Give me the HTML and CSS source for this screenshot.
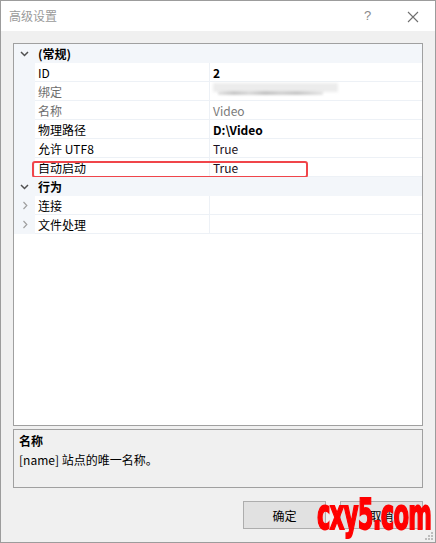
FILE: index.html
```html
<!DOCTYPE html>
<html>
<head>
<meta charset="utf-8">
<link rel="stylesheet" href="styles.css">
</head>
<body>
<div class="window">
  <div class="titlebar">
    <span class="title">高级设置</span>
    <span class="help">?</span>
    <svg class="close" width="12" height="12" viewBox="0 0 12 12"><path d="M1 1 L11 11 M11 1 L1 11" stroke="#6f6f6f" stroke-width="1.1" fill="none"/></svg>
  </div>
  <div class="content">
    <div class="grid">
      <div class="row cat">
        <div class="gutter"><svg class="chev-down" width="9" height="6" viewBox="0 0 9 6"><path d="M1 1 L4.5 4.5 L8 1" stroke="#505050" stroke-width="1.5" fill="none"/></svg></div>
        <div class="catname">(常规)</div>
      </div>
      <div class="row">
        <div class="gutter"></div>
        <div class="label">ID</div>
        <div class="value bold">2</div>
      </div>
      <div class="row">
        <div class="gutter"></div>
        <div class="label dim">绑定</div>
        <div class="value"><span class="blur1"></span><span class="blur2"></span></div>
      </div>
      <div class="row">
        <div class="gutter"></div>
        <div class="label dim">名称</div>
        <div class="value dim">Video</div>
      </div>
      <div class="row">
        <div class="gutter"></div>
        <div class="label">物理路径</div>
        <div class="value bold">D:\Video</div>
      </div>
      <div class="row">
        <div class="gutter"></div>
        <div class="label">允许 UTF8</div>
        <div class="value">True</div>
      </div>
      <div class="row">
        <div class="gutter"></div>
        <div class="label">自动启动</div>
        <div class="value">True</div>
        <div class="highlight"></div>
      </div>
      <div class="row cat">
        <div class="gutter"><svg class="chev-down" width="9" height="6" viewBox="0 0 9 6"><path d="M1 1 L4.5 4.5 L8 1" stroke="#505050" stroke-width="1.5" fill="none"/></svg></div>
        <div class="catname">行为</div>
      </div>
      <div class="row">
        <div class="gutter"><svg class="chev-right" width="6" height="9" viewBox="0 0 6 9"><path d="M1.5 1 L4.8 4.5 L1.5 8" stroke="#a0a0a0" stroke-width="1.2" fill="none"/></svg></div>
        <div class="label">连接</div>
        <div class="value"></div>
      </div>
      <div class="row">
        <div class="gutter"><svg class="chev-right" width="6" height="9" viewBox="0 0 6 9"><path d="M1.5 1 L4.8 4.5 L1.5 8" stroke="#a0a0a0" stroke-width="1.2" fill="none"/></svg></div>
        <div class="label">文件处理</div>
        <div class="value"></div>
      </div>
    </div>
    <div class="desc">
      <div class="desc-title">名称</div>
      <div class="desc-text">[name] 站点的唯一名称。</div>
    </div>
    <div class="buttons">
      <button class="btn">确定</button>
      <button class="btn">取消</button>
      <div class="watermark">cxy5.com</div>
      <svg class="grip" width="9" height="9" viewBox="0 0 9 9">
        <rect x="6" y="0" width="2" height="2" fill="#bdbdbd"/>
        <rect x="3" y="3" width="2" height="2" fill="#bdbdbd"/>
        <rect x="6" y="3" width="2" height="2" fill="#bdbdbd"/>
        <rect x="0" y="6" width="2" height="2" fill="#bdbdbd"/>
        <rect x="3" y="6" width="2" height="2" fill="#bdbdbd"/>
        <rect x="6" y="6" width="2" height="2" fill="#bdbdbd"/>
      </svg>
    </div>
  </div>
</div>
</body>
</html>
```
FILE: styles.css
```css
html, body {
  margin: 0;
  padding: 0;
}
body {
  width: 436px;
  height: 543px;
  overflow: hidden;
  font-family: "Noto Sans CJK SC", "Noto Sans", sans-serif;
  font-size: 12px;
  color: #000;
}
.window {
  box-sizing: border-box;
  width: 436px;
  height: 543px;
  border: 1px solid #9c9c9c;
  background: #f0f0f0;
  display: flex;
  flex-direction: column;
  position: relative;
  overflow: hidden;
}
.titlebar {
  height: 30px;
  background: #fff;
  display: flex;
  align-items: center;
  position: relative;
}
.title {
  margin-left: 8px;
  font-size: 12px;
  color: #9a9a9a;
  line-height: 14px;
}
.help {
  position: absolute;
  left: 363px;
  top: 7px;
  color: #8a8a8a;
  font-family: "Liberation Sans", sans-serif;
  font-size: 13px;
}
.close {
  position: absolute;
  left: 406px;
  top: 10px;
}
.content {
  padding: 12px 12px 0 12px;
  display: flex;
  flex-direction: column;
}
.grid {
  box-sizing: border-box;
  height: 383px;
  border: 1px solid #a0a0a0;
  background: #fff;
}
.row {
  display: flex;
  height: 19px;
  position: relative;
}
.gutter {
  width: 21px;
  flex: none;
  background: #f3f6fa;
  display: flex;
  align-items: center;
  justify-content: center;
}
.cat {
  background: #f3f6fa;
}
.catname {
  padding-left: 3px;
  font-weight: bold;
  line-height: 20px;
}
.label {
  box-sizing: border-box;
  width: 175px;
  flex: none;
  padding-left: 3px;
  line-height: 20px;
  height: 19px;
  border-bottom: 1px solid #edf1f6;
  border-right: 1px solid #edf1f6;
  white-space: nowrap;
}
.value {
  flex: 1;
  padding-left: 3px;
  line-height: 20px;
  height: 18px;
  border-bottom: 1px solid #edf1f6;
  position: relative;
  color: #1a1020;
}
.dim {
  color: #6d6d6d;
}
.value.dim {
  color: #7a7a7a;
}
.bold {
  font-weight: bold;
  color: #000;
}
.blur1 {
  position: absolute;
  left: 3px;
  top: 1px;
  width: 125px;
  height: 9px;
  background: #ececec;
  filter: blur(1.5px);
}
.blur2 {
  position: absolute;
  left: 8px;
  top: 9px;
  width: 105px;
  height: 4px;
  background: linear-gradient(90deg, #e4e4e4 0%, #c8c8c8 15%, #dadada 30%, #c4c4c4 45%, #d2d2d2 60%, #c8c8c8 75%, #e6e6e6 100%);
  filter: blur(1px);
}
.highlight {
  position: absolute;
  left: 18px;
  top: 3px;
  width: 272px;
  height: 13px;
  border: 2px solid #f0454a;
  border-radius: 3px;
}
.desc {
  box-sizing: border-box;
  margin-top: 3px;
  height: 59px;
  border: 1px solid #a0a0a0;
  padding: 2px 5px;
}
.desc-title {
  font-weight: bold;
  line-height: 18px;
}
.desc-text {
  line-height: 20px;
}
.buttons {
  margin-top: 13px;
  display: flex;
  justify-content: flex-end;
  gap: 14px;
  position: relative;
}
.btn {
  box-sizing: border-box;
  width: 83px;
  height: 28px;
  background: #e1e1e1;
  border: 1px solid #adadad;
  font-family: "Noto Sans CJK SC", sans-serif;
  font-size: 12px;
  color: #000;
  padding: 0;
  margin: 0;
}
.watermark {
  position: absolute;
  left: 304px;
  top: -7px;
  color: #ff0000;
  font-family: "DejaVu Sans Condensed", "Liberation Sans Narrow", sans-serif;
  font-weight: bold;
  font-size: 36px;
  letter-spacing: -1px;
  line-height: 36px;
  white-space: nowrap;
  -webkit-text-stroke: 1.5px #ff0000;
  transform: scale(0.7, 1.18);
  transform-origin: top left;
}
.grip {
  position: absolute;
  right: -11px;
  top: 31px;
}
```
